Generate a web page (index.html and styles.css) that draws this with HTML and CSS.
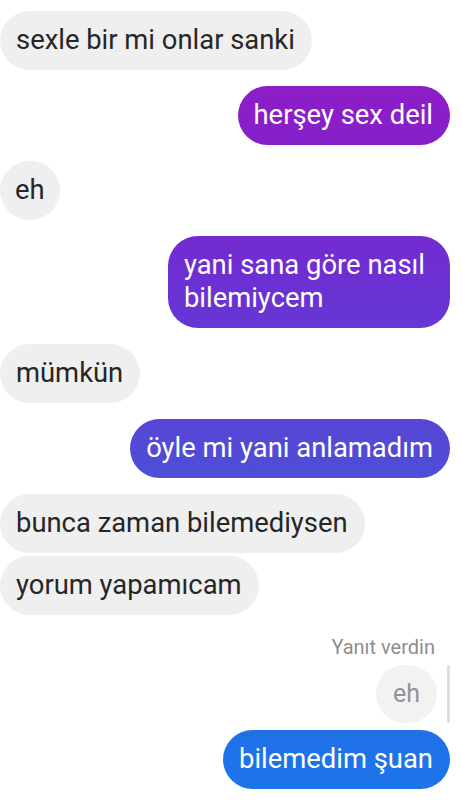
FILE: index.html
```html
<!DOCTYPE html>
<html lang="tr">
<head>
<meta charset="utf-8">
<title>Sohbet</title>
<link rel="stylesheet" href="styles.css">
</head>
<body>
<main class="thread">
  <div class="msg in">sexle bir mi onlar sanki</div>
  <div class="msg out">herşey sex deil</div>
  <div class="msg in round">eh</div>
  <div class="msg out multi">yani sana göre nasıl<br>bilemiycem</div>
  <div class="msg in">mümkün</div>
  <div class="msg out">öyle mi yani anlamadım</div>
  <div class="msg in">bunca zaman bilemediysen</div>
  <div class="msg in next">yorum yapamıcam</div>

  <div class="reply">
    <div class="reply-label">Yanıt verdin</div>
    <div class="reply-quote">
      <div class="quoted">eh</div>
      <span class="quote-bar"></span>
    </div>
  </div>
  <div class="msg out next-reply">bilemedim şuan</div>
</main>
</body>
</html>
```

FILE: styles.css
```css
html, body {
  margin: 0;
  padding: 0;
  background: #ffffff;
}

body {
  font-family: Roboto, "Noto Sans", "Liberation Sans", sans-serif;
  color: #262626;
}

.thread {
  display: flex;
  flex-direction: column;
  padding: 11px 12px 0 0;
}

.msg {
  font-size: 27.4px;
  line-height: 33px;
  padding: 13px 17px 13px 16px;
  border-radius: 30px;
  margin-top: 16px;
  max-width: 380px;
  white-space: nowrap;
}

.msg:first-child {
  margin-top: 0;
}

.msg.in {
  align-self: flex-start;
  background: #efefef;
  color: #262626;
}

.msg.out {
  align-self: flex-end;
  color: #ffffff;
  background: linear-gradient(to bottom,
    #951ac6 0px,
    #8a1ec8 115px,
    #6c30d3 282px,
    #534ad6 449px,
    #3062df 610px,
    #1e73e8 760px,
    #1a76e9 803px) fixed;
}

.msg.multi {
  padding-right: 25px;
}

.msg.round {
  padding-left: 15px;
  padding-right: 15px;
}

.msg.next {
  margin-top: 3px;
}

.reply {
  display: flex;
  flex-direction: column;
  align-items: flex-end;
  margin-top: 20px;
}

.reply-label {
  font-size: 20px;
  line-height: 24px;
  color: #8e8e8e;
  padding-right: 15px;
}

.reply-quote {
  display: flex;
  align-items: stretch;
  gap: 10px;
  margin-top: 6px;
}

.quoted {
  font-size: 25px;
  line-height: 30px;
  padding: 14px 17px;
  border-radius: 30px;
  background: #f2f2f2;
  color: #939393;
}

.quote-bar {
  width: 3px;
  border-radius: 2px;
  background: #dedede;
}

.msg.next-reply {
  margin-top: 7px;
}
```
